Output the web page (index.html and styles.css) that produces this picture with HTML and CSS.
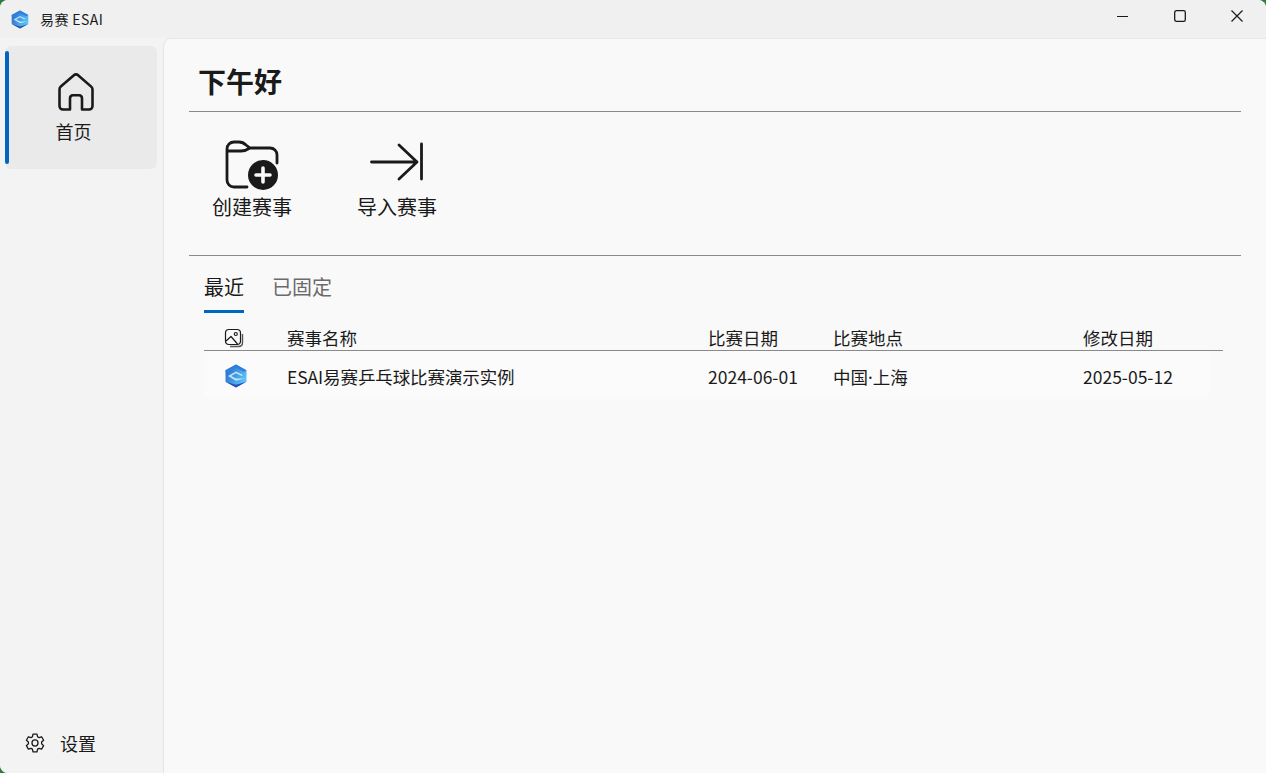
FILE: index.html
```html
<!DOCTYPE html>
<html lang="zh-CN">
<head>
    <meta charset="UTF-8">
    <title>易赛 ESAI</title>
    <link rel="stylesheet" href="styles.css">
</head>
<body>
    <svg width="0" height="0" class="defs">
        <defs>
            <linearGradient id="logoBlue" x1="0" y1="0" x2="1" y2="0.6">
                <stop offset="0" stop-color="#2560c8"/>
                <stop offset="1" stop-color="#5cc6f6"/>
            </linearGradient>
            <symbol id="logo" viewBox="0 0 22 24">
                <path d="M11 0.500 21.500 6.300V17.700L11 23.500 0.500 17.700V6.300Z" fill="url(#logoBlue)"/>
                <path d="M11 0.500 21.500 6.300 19 7.800 11 3.800 2.500 8.600 0.500 7.500V6.300Z" fill="#2f7fe0"/>
                <path d="M3 12 11 7.500 18 11 16.600 11.900 11 9.200 6.200 12 11 14.600 19.500 14.600 11 16.800Z" fill="#bfe6fa"/>
                <path d="M0.500 17.700 11 23.500 21.500 17.700 11 20.800Z" fill="#2a4fb4"/>
            </symbol>
        </defs>
    </svg>

    <div class="window">
        <header class="titlebar">
            <svg class="title-logo"><use href="#logo"/></svg>
            <span class="title-text">易赛 ESAI</span>
            <div class="win-buttons">
                <button class="win-btn">
                    <svg width="12" height="12" viewBox="0 0 12 12"><path d="M0 6.500H11" stroke="#1a1a1a" stroke-width="1.200"/></svg>
                </button>
                <button class="win-btn">
                    <svg width="12" height="12" viewBox="0 0 12 12"><rect x="0.700" y="0.700" width="10.600" height="10.600" rx="1.600" fill="none" stroke="#1a1a1a" stroke-width="1.300"/></svg>
                </button>
                <button class="win-btn">
                    <svg width="12" height="12" viewBox="0 0 12 12"><path d="M0.500 0.500 11.500 11.500M11.500 0.500 0.500 11.500" stroke="#1a1a1a" stroke-width="1.200"/></svg>
                </button>
            </div>
        </header>

        <div class="body">
            <nav class="sidebar">
                <div class="nav-item">
                    <span class="nav-indicator"></span>
                    <svg class="nav-icon" width="36" height="38" viewBox="0 0 36 38">
                        <path d="M15.600 2.400 2.800 13.600C1.900 14.400 1.500 15.300 1.500 16.500V33C1.500 35 3 36.500 5 36.500H12V25.500C12 23.500 13.300 22.300 15 22.300H21C22.800 22.300 24 23.500 24 25.500V36.500H31C33 36.500 34.500 35 34.500 33V16.500C34.500 15.300 34.100 14.400 33.200 13.600L20.400 2.400C19 1.200 17 1.200 15.600 2.400Z" fill="none" stroke="#1a1a1a" stroke-width="2.600" stroke-linejoin="round"/>
                    </svg>
                    <span class="nav-label">首页</span>
                </div>
                <div class="settings">
                    <svg width="22" height="22" viewBox="0 0 24 24" fill="none" stroke="#1a1a1a" stroke-width="1.400" stroke-linejoin="round">
                        <path d="M9.800 2.300h4.400l.6 2.900 1.600.9 2.800-.9 2.200 3.800-2.200 2v1.900l2.200 2-2.200 3.800-2.800-.9-1.600.9-.6 2.900H9.800l-.6-2.900-1.600-.9-2.800.9-2.200-3.800 2.200-2v-1.900l-2.200-2 2.200-3.800 2.800.9 1.600-.9z"/>
                        <circle cx="12" cy="12" r="3.300"/>
                    </svg>
                    <span class="settings-label">设置</span>
                </div>
            </nav>

            <main class="content">
                <h1 class="greeting">下午好</h1>

                <section class="actions">
                    <div class="action">
                        <svg width="56" height="52" viewBox="0 0 56 52">
                            <path d="M23 49H10C6 49 3 46 3 42V11C3 7 6 4 10 4H15C18 4 20 5 22 7L26 10H46C50 10 53 13 53 17V25M3 13H17C20 13 23 12 26 10" fill="none" stroke="#1a1a1a" stroke-width="2.800" stroke-linecap="round" stroke-linejoin="round"/>
                            <circle cx="39" cy="37" r="15" fill="#1a1a1a"/>
                            <path d="M39 30V44M32 37H46" stroke="#f9f9f9" stroke-width="3.600" stroke-linecap="round"/>
                        </svg>
                        <span class="action-label">创建赛事</span>
                    </div>
                    <div class="action">
                        <svg width="56" height="52" viewBox="0 0 56 52">
                            <path d="M2.500 24H48M30 7 48 24 30 41M52.500 6V41" fill="none" stroke="#1a1a1a" stroke-width="2.800" stroke-linecap="round" stroke-linejoin="round"/>
                        </svg>
                        <span class="action-label">导入赛事</span>
                    </div>
                </section>

                <div class="tabs">
                    <span class="tab tab-active">最近</span>
                    <span class="tab">已固定</span>
                </div>

                <div class="table">
                    <div class="row table-head">
                        <span class="cell-icon">
                            <svg width="20" height="20" viewBox="0 0 20 20" fill="none" stroke="#1a1a1a" stroke-width="1.200" stroke-linejoin="round">
                                <rect x="1.500" y="1.500" width="15" height="15" rx="3.500"/>
                                <path d="M2 13 7 8.500 13.500 16"/>
                                <circle cx="11.800" cy="6" r="1.500"/>
                                <path d="M18.500 6V14.500C18.500 16.800 16.800 18.500 14.500 18.500H6" stroke-width="1.400" stroke="#555"/>
                            </svg>
                        </span>
                        <span class="cell-name">赛事名称</span>
                        <span class="cell-date">比赛日期</span>
                        <span class="cell-place">比赛地点</span>
                        <span>修改日期</span>
                    </div>
                    <div class="row table-row">
                        <span class="cell-icon"><svg class="row-logo"><use href="#logo"/></svg></span>
                        <span class="cell-name row-title">ESAI易赛乒乓球比赛演示实例</span>
                        <span class="cell-date">2024-06-01</span>
                        <span class="cell-place cell-latin">中国·上海</span>
                        <span>2025-05-12</span>
                    </div>
                </div>
            </main>
        </div>
    </div>
</body>
</html>
```

FILE: styles.css
```css
* {
    box-sizing: border-box;
}

html, body {
    margin: 0;
    height: 100%;
    overflow: hidden;
}

body {
    font-family: "Noto Sans CJK SC", "Noto Sans", sans-serif;
    color: #1a1a1a;
    background: #2f7d3b;
}

.defs {
    position: absolute;
}

.window {
    display: flex;
    flex-direction: column;
    height: 100%;
    overflow: hidden;
    border-radius: 8px 8px 0 8px;
    background: #f3f3f3;
}

.titlebar {
    display: flex;
    align-items: center;
    height: 38px;
    flex-shrink: 0;
    background: #f0f0f0;
    padding-left: 11px;
}

.title-logo {
    width: 18px;
    height: 19px;
}

.title-text {
    margin-left: 11px;
    font-size: 14px;
    line-height: 18px;
    letter-spacing: 0.4px;
}

.win-buttons {
    display: flex;
    margin-left: auto;
    padding-right: 1px;
    align-self: flex-start;
}

.win-btn {
    display: flex;
    align-items: center;
    justify-content: center;
    width: 57px;
    height: 32px;
    padding: 0;
    border: none;
    background: none;
}

.body {
    display: flex;
    flex: 1;
    min-height: 0;
}

.sidebar {
    display: flex;
    flex-direction: column;
    width: 163px;
    flex-shrink: 0;
    padding: 8px 6px 0 5px;
    background: #f3f3f3;
}

.nav-item {
    position: relative;
    display: flex;
    flex-direction: column;
    align-items: center;
    height: 123px;
    padding-top: 27px;
    border-radius: 6px;
    background: #eaeaea;
}

.nav-indicator {
    position: absolute;
    left: 0;
    top: 5px;
    width: 4px;
    height: 113px;
    border-radius: 2px;
    background: #0067c0;
}

.nav-icon {
    margin-right: 10px;
}

.nav-label {
    margin-top: 8px;
    margin-right: 15px;
    font-size: 18px;
    line-height: 24px;
}

.settings {
    display: flex;
    align-items: center;
    margin-top: auto;
    margin-bottom: 18px;
    padding-left: 19px;
}

.settings-label {
    margin-left: 14px;
    font-size: 18px;
    line-height: 24px;
}

.content {
    flex: 1;
    padding: 0 25px;
    background: #f9f9f9;
    border-top: 1px solid #e8e8e8;
    border-left: 1px solid #e5e5e5;
    border-top-left-radius: 8px;
}

.greeting {
    height: 73px;
    margin: 0;
    padding: 22px 0 0 9px;
    border-bottom: 1px solid #8a8a8a;
    font-size: 28px;
    line-height: 40px;
    font-weight: 700;
}

.actions {
    display: flex;
    gap: 65px;
    height: 144px;
    padding: 26px 0 0 23px;
    border-bottom: 1px solid #8a8a8a;
}

.action {
    display: flex;
    flex-direction: column;
    align-items: center;
    width: 80px;
}

.action-label {
    margin-top: 2px;
    font-size: 20px;
    line-height: 29px;
    white-space: nowrap;
}

.tabs {
    display: flex;
    gap: 28px;
    margin-left: 15px;
    padding-top: 16px;
}

.tab {
    height: 41px;
    font-size: 20px;
    line-height: 30px;
    color: #6b6b6b;
}

.tab-active {
    color: #1a1a1a;
    border-bottom: 3px solid #0067c0;
}

.table {
    margin: 12px 18px 0 15px;
}

.row {
    display: flex;
    align-items: center;
    font-size: 17.5px;
}

.table-head {
    height: 26px;
    border-bottom: 1px solid #8a8a8a;
    line-height: 24px;
    align-items: flex-end;
}

.table-row {
    height: 46px;
    margin-right: 14px;
    padding-top: 4px;
    background: #fbfbfb;
}

.cell-icon {
    display: flex;
    justify-content: center;
    width: 60px;
    margin-right: 23px;
    padding-bottom: 2px;
}

.row-logo {
    width: 22px;
    height: 24px;
    margin-top: 2px;
    margin-left: 4px;
}

.cell-name {
    width: 421px;
}

.row-title {
    letter-spacing: -0.1px;
}

.cell-date {
    width: 125px;
}

.cell-place {
    width: 250px;
}

/* 中间点要窄的那个 */
.cell-latin {
    font-family: "Noto Sans", "Noto Sans CJK SC", sans-serif;
}
```
